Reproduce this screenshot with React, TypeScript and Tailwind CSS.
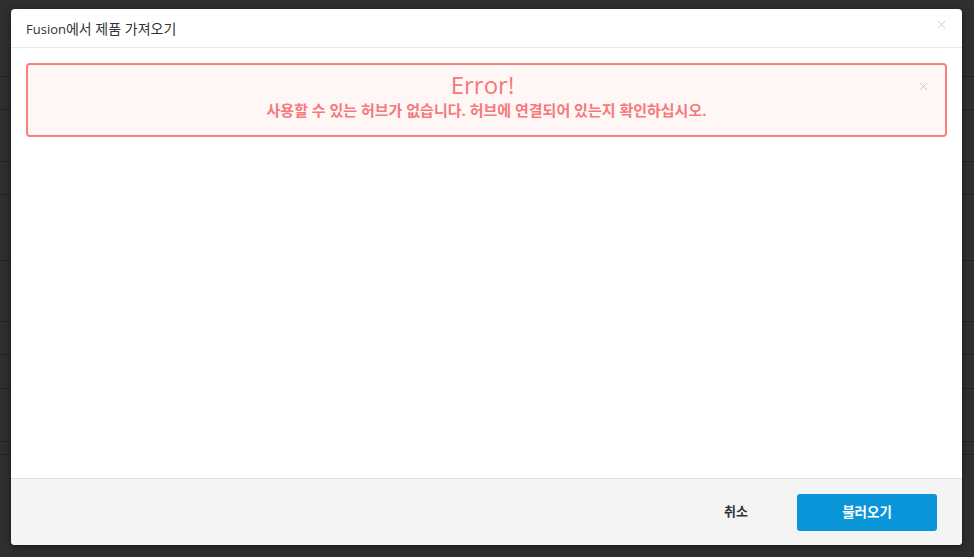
import { X } from "lucide-react";

const rowHeights = [77, 33, 52, 33, 66, 61, 33, 34, 53, 13, 33, 32];

export default function App() {
  return (
    <div
      className="relative w-[974px] h-[557px] overflow-hidden bg-[#2f2f2f]"
      style={{ fontFamily: '"Open Sans", "Noto Sans CJK KR", sans-serif' }}
    >
      {/* page behind the overlay */}
      <div className="flex flex-col">
        {rowHeights.map((h, i) => (
          <div
            key={i}
            className={
              i >= 10
                ? "border-b border-[#1d3544] shrink-0"
                : "border-b border-[#222222] shrink-0"
            }
            style={{ height: h }}
          />
        ))}
      </div>

      {/* modal */}
      <div className="absolute left-[11px] top-[9px] w-[951px] h-[536px] bg-white rounded-[4px] flex flex-col overflow-hidden shadow-[0_2px_6px_rgba(0,0,0,0.5)]">
        <div className="h-[39px] shrink-0 border-b border-[#e8e8e8] flex items-center justify-between pl-[15px] pr-[14px]">
          <span className="text-[13px] text-[#333] pt-[1px]">
            Fusion<span className="text-[14px]">에서 제품 가져오기</span>
          </span>
          <X size={13} strokeWidth={1.6} className="text-[#c4c4c4] -mt-[8px]" />
        </div>

        <div className="flex-1 px-[15px] pt-[15px]">
          <div className="relative h-[74px] border-2 border-[#f98080] bg-[#fff6f6] rounded-[4px] flex flex-col items-center pt-[4px]">
            <div className="text-[24px] leading-[32px] text-[#f47a7b] -ml-[8px]">Error!</div>
            <div className="text-[15px] leading-[18px] font-bold text-[#f47a7b]">
              사용할 수 있는 허브가 없습니다. 허브에 연결되어 있는지 확인하십시오.
            </div>
            <X
              size={13}
              strokeWidth={1.6}
              className="absolute right-[15px] top-[15px] text-[#c4c4c4]"
            />
          </div>
        </div>

        <div className="h-[67px] shrink-0 border-t border-[#dedede] bg-[#f4f4f4] flex items-center justify-end pr-[25px]">
          <button className="text-[13px] font-bold text-[#333] mr-[49px]">취소</button>
          <button className="w-[140px] h-[37px] bg-[#0a95d8] rounded-[3px] text-[13.5px] font-bold text-white">
            불러오기
          </button>
        </div>
      </div>
    </div>
  );
}
